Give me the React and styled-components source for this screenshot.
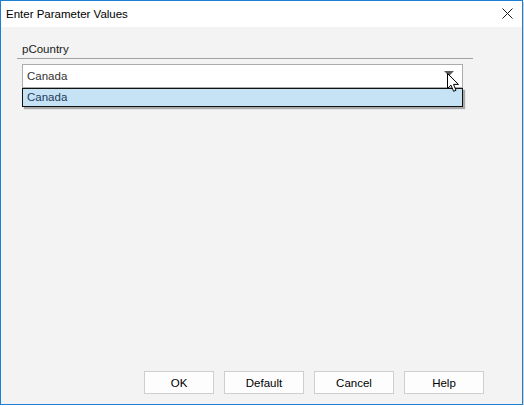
import React from "react";
import styled, { createGlobalStyle } from "styled-components";

const GlobalStyle = createGlobalStyle`
  html, body {
    margin: 0;
    padding: 0;
    background: #ffffff;
  }
  body {
    font-family: "Liberation Sans", Arial, sans-serif;
    font-size: 11.5px;
  }
`;

function Cursor() {
  return (
    <CursorSvg width="13" height="20" viewBox="0 0 13 20">
      <path
        d="M0.5 0.5 L0.5 15.5 L4 12.2 L6.6 18.3 L9 17.3 L6.5 11.4 L11.5 11.4 Z"
        fill="#ffffff"
        stroke="#000000"
        strokeWidth="1"
        strokeLinejoin="miter"
      />
    </CursorSvg>
  );
}

function App() {
  return (
    <>
      <GlobalStyle />
      <Window>
        <TitleBar>
          <Title>Enter Parameter Values</Title>
          <CloseButton aria-label="Close">
            <svg width="11" height="11" viewBox="0 0 11 11">
              <path d="M0.5 0.5 L10.5 10.5 M10.5 0.5 L0.5 10.5" stroke="#1a1a1a" strokeWidth="1" />
            </svg>
          </CloseButton>
        </TitleBar>
        <Body>
          <Group>
            <Label>pCountry</Label>
            <Combo>
              <ComboValue>Canada</ComboValue>
              <Arrow />
              <List>
                <Option selected>Canada</Option>
              </List>
              <Cursor />
            </Combo>
          </Group>
          <Buttons>
            <Button narrow>OK</Button>
            <Button>Default</Button>
            <Button>Cancel</Button>
            <Button>Help</Button>
          </Buttons>
        </Body>
      </Window>
    </>
  );
}

export default App;

const Window = styled.div`
  width: 523px;
  height: 405px;
  box-sizing: border-box;
  border: 1px solid #1c7fd6;
  background: #f3f3f3;
  display: flex;
  flex-direction: column;
  box-shadow: 1px 2px 0 rgba(0, 0, 0, 0.18);
`;

const TitleBar = styled.div`
  height: 26px;
  flex-shrink: 0;
  background: #ffffff;
  display: flex;
  align-items: center;
  justify-content: space-between;
  padding: 0 9px 0 5px;
`;

const Title = styled.span`
  color: #000000;
  font-size: 11.5px;
  padding-bottom: 1px;
`;

const CloseButton = styled.div`
  width: 11px;
  height: 11px;
  display: flex;
  margin-bottom: 1px;
`;

const Body = styled.div`
  flex: 1;
  display: flex;
  flex-direction: column;
  padding: 14px 38px 10px 16px;
`;

const Group = styled.div`
  width: 456px;
`;

const Label = styled.div`
  height: 17px;
  line-height: 17px;
  padding-left: 5px;
  border-bottom: 1px solid #a0a0a0;
  color: #1a1a1a;
`;

const Combo = styled.div`
  position: relative;
  margin: 5px 0 0 5px;
  width: 441px;
  height: 24px;
  box-sizing: border-box;
  border: 1px solid #acacac;
  background: #ffffff;
  display: flex;
  align-items: center;
  padding: 0 8px 0 4px;
`;

const ComboValue = styled.span`
  flex: 1;
  color: #333333;
  padding-bottom: 1px;
`;

const Arrow = styled.span`
  width: 0;
  height: 0;
  border-left: 5px solid transparent;
  border-right: 5px solid transparent;
  border-top: 5px solid #5a5a5a;
  margin-bottom: 6px;
`;

const List = styled.div`
  position: absolute;
  left: -1px;
  top: 23px;
  width: 441px;
  height: 19px;
  box-sizing: border-box;
  border: 1px solid #111111;
  background: #c6e3f5;
  box-shadow: 2px 2px 1px rgba(0, 0, 0, 0.3);
`;

const Option = styled.div`
  height: 17px;
  line-height: 17px;
  padding-left: 4px;
  color: ${(p) => (p.selected ? "#1e395b" : "#333333")};
`;

const CursorSvg = styled.svg`
  position: absolute;
  left: 424px;
  top: 8px;
`;

const Buttons = styled.div`
  margin-top: auto;
  display: flex;
  justify-content: flex-end;
  gap: 10px;
`;

const Button = styled.div`
  width: ${(p) => (p.narrow ? "70px" : "80px")};
  height: 23px;
  box-sizing: border-box;
  border: 1px solid #cfcfcf;
  background: #fdfdfd;
  display: flex;
  align-items: center;
  justify-content: center;
  color: #000000;
`;
